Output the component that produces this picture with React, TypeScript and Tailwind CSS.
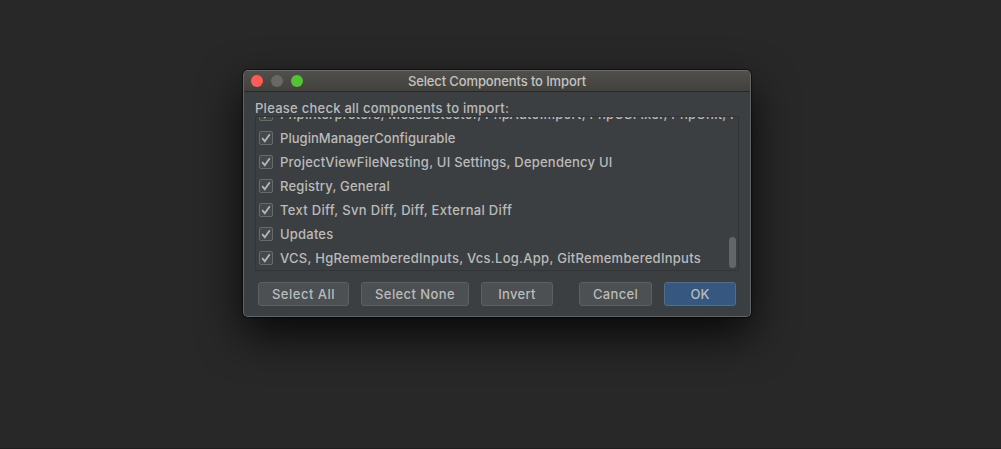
const items = [
  { label: 'PhpInterpreters, MessDetector, PhpAutoImport, PhpCSFixer, PhpUnit, PhpStan', tracking: 'tracking-[0.23px]' },
  { label: 'PluginManagerConfigurable', tracking: 'tracking-[0.04px]' },
  { label: 'ProjectViewFileNesting, UI Settings, Dependency UI', tracking: 'tracking-[0.22px]' },
  { label: 'Registry, General', tracking: 'tracking-[0.2px]' },
  { label: 'Text Diff, Svn Diff, Diff, External Diff', tracking: 'tracking-[0.32px]' },
  { label: 'Updates', tracking: 'tracking-[0.2px]' },
  { label: 'VCS, HgRememberedInputs, Vcs.Log.App, GitRememberedInputs', tracking: 'tracking-[0.27px]' },
];

function CheckBox() {
  return (
    <span className="flex size-[14px] shrink-0 items-center justify-center rounded-[2px] border border-[#656b6b] bg-[#43494a]">
      <svg width="12" height="12" viewBox="0 0 12 12" fill="none">
        <path d="M2.2 6.2 4.8 9.2 9.8 2.2" stroke="#b4b4b4" strokeWidth="1.9" />
      </svg>
    </span>
  );
}

function Button({ label, className }: { label: string; className: string }) {
  return (
    <button
      className={`flex h-6 shrink-0 items-center justify-center rounded-[3px] border pt-px text-[13px] leading-none text-[#bbbbbb] ${className}`}
    >
      {label}
    </button>
  );
}

const plain = 'border-[#5e6060] bg-[#4c5052]';

export default function App() {
  return (
    <div className="h-[449px] w-[1001px] overflow-hidden border-b border-[#201f1f] bg-[#282828] pl-[243px] pt-[70px] font-['Inter',sans-serif] font-[450]">
      <div className="flex h-[247px] w-[508px] flex-col overflow-hidden rounded-[5px] border border-[#626566] border-t-[#6a6967] bg-[#3c3f41] shadow-[0_0_1px_1px_rgba(0,0,0,0.5),0_18px_44px_rgba(0,0,0,0.8)]">
        <header className="relative flex h-[21px] shrink-0 items-center justify-center border-b border-[#282828] bg-linear-to-b from-[#504f4c] to-[#42413e]">
          <div className="absolute left-[7px] top-1 flex gap-2">
            <span className="size-3 rounded-full bg-[#ff5c56]" />
            <span className="size-3 rounded-full bg-[#6a6866]" />
            <span className="size-3 rounded-full bg-[#54c234]" />
          </div>
          <h1 className="text-[13px] font-[450] leading-5 tracking-[-0.12px] text-[#c3c3c1]">Select Components to Import</h1>
        </header>
        <p className="ml-[11px] mt-2 h-4 shrink-0 text-[13px] leading-[17px] tracking-[0.26px] text-[#bbbbbb]">
          Please check all components to import:
        </p>
        <div className="relative ml-[11px] flex h-[155px] w-[484px] shrink-0 flex-col justify-end overflow-hidden border border-[#323435] pl-[3px] pr-[3px]">
          <ul className="flex shrink-0 flex-col overflow-hidden">
            {items.map((item) => (
              <li key={item.label} className="flex h-6 shrink-0 items-center gap-[7px]">
                <CheckBox />
                <span className={`whitespace-nowrap text-[13px] leading-6 text-[#bbbbbb] ${item.tracking}`}>{item.label}</span>
              </li>
            ))}
          </ul>
          <span className="absolute bottom-[2px] right-[2px] h-[31px] w-[7px] rounded-full bg-[#636566]" />
        </div>
        <footer className="ml-[14px] mt-[11px] flex">
          <Button label="Select All" className={`w-[91px] tracking-[0.5px] ${plain}`} />
          <Button label="Select None" className={`ml-3 w-[108px] tracking-[0.4px] ${plain}`} />
          <Button label="Invert" className={`ml-3 w-[72px] tracking-[0.3px] ${plain}`} />
          <Button label="Cancel" className={`ml-[26px] w-[73px] tracking-[0.3px] ${plain}`} />
          <Button label="OK" className="ml-3 w-[72px] border-[#4c708c] bg-[#365880]" />
        </footer>
      </div>
    </div>
  );
}
